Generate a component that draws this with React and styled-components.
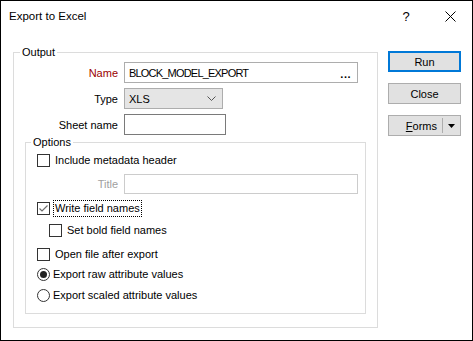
import React from 'react';
import styled, { createGlobalStyle } from 'styled-components';

const GlobalStyle = createGlobalStyle`
  body {
    margin: 0;
    background: #fff;
    font-family: "Liberation Sans", Arial, sans-serif;
    font-size: 11px;
    color: #000;
  }
`;

const Window = styled.div`
  width: 473px;
  height: 341px;
  box-sizing: border-box;
  border: 1px solid #000;
  background: #fff;
  display: flex;
  flex-direction: column;
`;

const TitleBar = styled.div`
  height: 30px;
  display: flex;
  align-items: center;
`;

const Caption = styled.div`
  flex: 1;
  padding-left: 8px;
  font-size: 11.5px;
`;

const TitleButton = styled.div`
  width: 44px;
  height: 30px;
  display: flex;
  align-items: center;
  justify-content: center;
  font-size: 13px;
`;

const Body = styled.div`
  flex: 1;
  display: flex;
  gap: 10px;
  padding: 14px 11px 12px 12px;
`;

const GroupBox = styled.fieldset`
  margin: ${(p) => p.$margin || '0'};
  padding: 0;
  min-width: 0;
  box-sizing: border-box;
  width: ${(p) => (p.$width ? `${p.$width}px` : 'auto')};
  border: 1px solid #dcdcdc;
`;

const GroupCaption = styled.legend`
  margin-left: ${(p) => p.$indent}px;
  padding: 0 2px;
  line-height: 14px;
`;

const FieldGrid = styled.div`
  display: grid;
  grid-template-columns: 104px auto;
  grid-auto-rows: 21px;
  column-gap: 6px;
  row-gap: 5px;
  align-items: center;
  justify-items: start;
  margin-top: 3px;
`;

const FieldLabel = styled.span`
  justify-self: end;
  color: ${(p) => p.$tone || '#000'};
`;

const TextBox = styled.div`
  width: ${(p) => p.$width}px;
  height: ${(p) => p.$height || 21}px;
  box-sizing: border-box;
  border: 1px solid ${(p) => p.$border || '#adadad'};
  background: ${(p) => p.$bg || '#fff'};
  display: flex;
  align-items: center;
  padding: 0 6px 0 4px;
`;

const Value = styled.span`
  flex: 1;
  letter-spacing: ${(p) => p.$tight ? '-0.8px' : '0'};
`;

const Ellipsis = styled.span`
  font-weight: bold;
  letter-spacing: 0.5px;
  position: relative;
  top: 1px;
`;

const OptionList = styled.div`
  display: flex;
  flex-direction: column;
  padding: 3px 0 10px 11px;
`;

const OptionRow = styled.div`
  display: flex;
  align-items: center;
  height: ${(p) => p.$h || 16}px;
  margin-top: ${(p) => p.$mt || 0}px;
  padding-left: ${(p) => p.$indent || 0}px;
`;

const TitleLabel = styled.span`
  width: 81px;
  margin-right: 6px;
  text-align: right;
  color: #a0a0a0;
`;

const Box = styled.span`
  width: 13px;
  height: 13px;
  box-sizing: border-box;
  border: 1px solid #333;
  background: #fff;
  display: inline-flex;
  flex-shrink: 0;
`;

const Round = styled.span`
  width: 13px;
  height: 13px;
  box-sizing: border-box;
  border: 1px solid #333;
  border-radius: 50%;
  background: #fff;
  display: inline-flex;
  align-items: center;
  justify-content: center;
  flex-shrink: 0;

  &::after {
    content: '';
    width: 7px;
    height: 7px;
    border-radius: 50%;
    background: ${(p) => (p.$on ? '#222' : 'transparent')};
  }
`;

const OptionText = styled.span`
  margin-left: ${(p) => (p.$radio ? 1 : 3)}px;
  padding: 0 1px;
  line-height: 15px;
  border: 1px dotted ${(p) => (p.$focus ? '#000' : 'transparent')};
`;

const ButtonColumn = styled.div`
  width: 73px;
  display: flex;
  flex-direction: column;
  gap: 11px;
  margin-top: 6px;
`;

const Button = styled.div`
  height: 21px;
  box-sizing: border-box;
  border: 1px solid ${(p) => (p.$primary ? '#0078d7' : '#adadad')};
  box-shadow: ${(p) => (p.$primary ? 'inset 0 0 0 1px #0078d7' : 'none')};
  background: #e1e1e1;
  display: flex;
  align-items: center;
  justify-content: center;
`;

const SplitMain = styled.span`
  flex: 1;
  text-align: right;
  padding-right: 5px;
`;

const SplitDivider = styled.span`
  width: 1px;
  height: 15px;
  background: #adadad;
`;

const SplitArrow = styled.span`
  width: 17px;
  display: flex;
  justify-content: center;
`;

const Check = ({ checked }) => (
  <Box>
    {checked && (
      <svg width="11" height="11" viewBox="0 0 11 11">
        <polyline points="1.5,5.5 4,8 9.5,2.5" fill="none" stroke="#6d6d6d" strokeWidth="1.2" />
      </svg>
    )}
  </Box>
);

const App = () => (
  <>
    <GlobalStyle />
    <Window>
      <TitleBar>
        <Caption>Export to Excel</Caption>
        <TitleButton>?</TitleButton>
        <TitleButton>
          <svg width="11" height="11" viewBox="0 0 11 11">
            <path d="M0.5 0.5 L10.5 10.5 M10.5 0.5 L0.5 10.5" stroke="#000" strokeWidth="1" />
          </svg>
        </TitleButton>
      </TitleBar>

      <Body>
        <GroupBox $width={365}>
          <GroupCaption $indent={6}>Output</GroupCaption>
          <FieldGrid>
            <FieldLabel $tone="#9a0000">Name</FieldLabel>
            <TextBox $width={234}>
              <Value $tight>BLOCK_MODEL_EXPORT</Value>
              <Ellipsis>...</Ellipsis>
            </TextBox>
            <FieldLabel>Type</FieldLabel>
            <TextBox $width={99} $bg="#e5e5e5">
              <Value>XLS</Value>
              <svg width="9" height="5" viewBox="0 0 9 5">
                <polyline points="0.5,0.5 4.5,4.5 8.5,0.5" fill="none" stroke="#555" strokeWidth="1" />
              </svg>
            </TextBox>
            <FieldLabel>Sheet name</FieldLabel>
            <TextBox $width={102} $border="#7a7a7a" />
          </FieldGrid>

          <GroupBox $margin="0 11px">
            <GroupCaption $indent={5}>Options</GroupCaption>
            <OptionList>
              <OptionRow>
                <Check />
                <OptionText>Include metadata header</OptionText>
              </OptionRow>
              <OptionRow $h={20} $mt={6}>
                <TitleLabel>Title</TitleLabel>
                <TextBox $width={234} $height={20} $border="#cccccc" />
              </OptionRow>
              <OptionRow $mt={6} $h={17}>
                <Check checked />
                <OptionText $focus>Write field names</OptionText>
              </OptionRow>
              <OptionRow $mt={5} $indent={12}>
                <Check />
                <OptionText>Set bold field names</OptionText>
              </OptionRow>
              <OptionRow $mt={8}>
                <Check />
                <OptionText>Open file after export</OptionText>
              </OptionRow>
              <OptionRow $mt={4}>
                <Round $on />
                <OptionText $radio>Export raw attribute values</OptionText>
              </OptionRow>
              <OptionRow $mt={5}>
                <Round />
                <OptionText $radio>Export scaled attribute values</OptionText>
              </OptionRow>
            </OptionList>
          </GroupBox>
        </GroupBox>

        <ButtonColumn>
          <Button $primary>Run</Button>
          <Button>Close</Button>
          <Button>
            <SplitMain>
              <u>F</u>orms
            </SplitMain>
            <SplitDivider />
            <SplitArrow>
              <svg width="7" height="4" viewBox="0 0 7 4">
                <polygon points="0,0 7,0 3.5,4" fill="#000" />
              </svg>
            </SplitArrow>
          </Button>
        </ButtonColumn>
      </Body>
    </Window>
  </>
);

export default App;
